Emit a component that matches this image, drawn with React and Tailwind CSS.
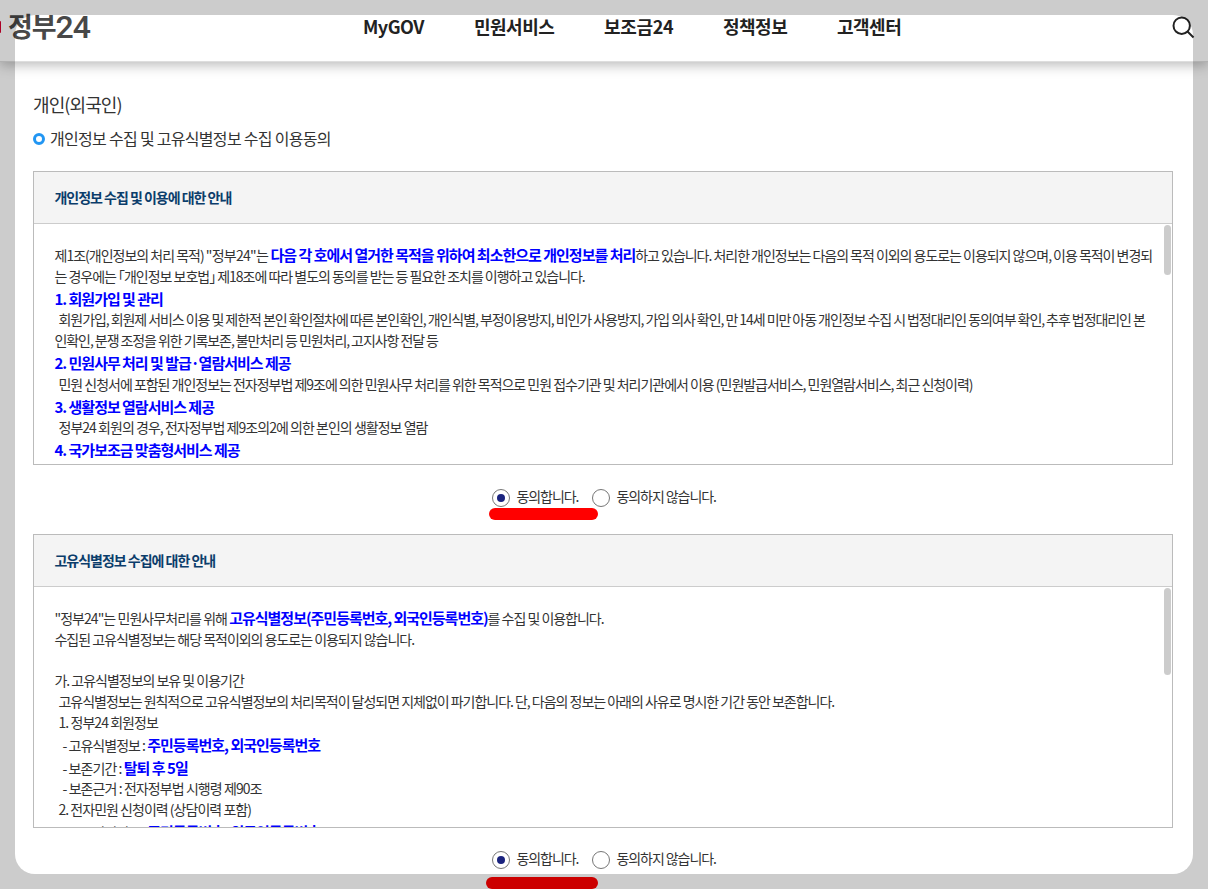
import React from 'react';

const menus = [
    { label: 'MyGOV', className: 'w-[111px]' },
    { label: '민원서비스', className: 'w-[130px]' },
    { label: '보조금24', className: 'w-[119px] tracking-[-0.3px]' },
    { label: '정책정보', className: 'w-[114px]' },
    { label: '고객센터', className: 'w-[80px]' },
];

function Em({ children }) {
    return <strong className="text-[15px] font-bold text-[#0000ff]">{children}</strong>;
}

function Line({ children, height = 'h-[21px]', className = '' }) {
    return <p className={`flex items-center whitespace-pre ${height} ${className}`}><span>{children}</span></p>;
}

function Header() {
    return (
        <header className="relative flex h-[62px] shrink-0 items-start border-b border-[#dedede] bg-white shadow-[0_3px_12px_rgba(0,0,0,0.28)]">
            <div className="flex w-[363px] items-start">
                <span className="mt-[21px] h-3 w-[1px] rounded-r-full bg-[#d8002f]"></span>
                <div className="ml-[7px] flex h-[53px] items-center whitespace-nowrap text-[#484848]">
                    <span className="text-[27px] font-bold tracking-[-1.1px]">정부</span>
                    <span className="pt-px font-['Roboto',sans-serif] text-[32px] font-medium tracking-[-0.9px]">24</span>
                </div>
            </div>
            <nav className="flex h-[52px] items-center text-[18px] font-bold tracking-[-0.5px] text-[#222]">
                {menus.map((m) => (
                    <a key={m.label} className={m.className}>{m.label}</a>
                ))}
            </nav>
            <svg className="ml-auto mr-[13px] mt-4 h-[23px] w-[23px]" viewBox="0 0 23 23" fill="none" stroke="#222" strokeWidth="2">
                <circle cx="9.7" cy="9.7" r="8.2" />
                <path d="M15.5 15.5L21.5 21.5" />
            </svg>
        </header>
    );
}

function TermsBox({ title, thumb, children }) {
    return (
        <section className="flex h-[294px] w-[1140px] flex-col border border-[#bbb]">
            <h3 className="flex h-[52px] shrink-0 items-center border-b border-[#ccc] bg-[#f4f4f4] pb-px pl-[20.5px] text-[14px] font-bold tracking-[-1.02px] text-[#0b3d6b]">
                {title}
            </h3>
            <div className="flex min-h-0 flex-1 justify-between overflow-hidden">
                <div className="pl-[20.5px] pt-[19px] text-[14px] leading-[21px] tracking-[-1.02px] text-[#333]">{children}</div>
                <div className={`mr-px mt-px w-[7px] shrink-0 rounded-full bg-[#ccc] ${thumb}`}></div>
            </div>
        </section>
    );
}

function Radio({ label, checked, className }) {
    return (
        <label className={`flex items-center whitespace-nowrap ${className}`}>
            <span className="mr-[6.5px] flex h-[18px] w-[18px] shrink-0 items-center justify-center rounded-full border border-[#777] bg-white">
                {checked && <span className="h-2 w-2 rounded-full bg-[#1a237e]"></span>}
            </span>
            <span className="pb-[3px]">{label}</span>
        </label>
    );
}

function AgreeRow({ className, markClass }) {
    return (
        <div className={`relative flex h-[69px] items-center pl-[459px] text-[14px] tracking-[-1.07px] text-[#333] ${className}`}>
            <Radio label="동의합니다." checked className="w-[100px]" />
            <Radio label="동의하지 않습니다." />
            <span className={`absolute h-3 rounded-[6px] bg-[#ff0000] ${markClass}`}></span>
        </div>
    );
}

export default function App() {
    return (
        <div className="relative flex h-[889px] w-[1208px] flex-col overflow-hidden bg-white font-['Noto_Sans_CJK_KR',sans-serif]">
            <Header />
            <main className="flex flex-col pl-[33px]">
                <h1 className="mt-7 h-7 text-[18px] leading-7 tracking-[-0.9px] text-[#333]">개인(외국인)</h1>
                <h2 className="mt-[9px] flex h-6 items-center text-[16px] tracking-[-0.7px] text-[#333]">
                    <span className="mr-[5px] h-3 w-3 rounded-full border-[3px] border-[#2196f3]"></span>
                    <span className="pb-[2px]">개인정보 수집 및 고유식별정보 수집 이용동의</span>
                </h2>
                <div className="h-5"></div>
                <TermsBox title="개인정보 수집 및 이용에 대한 안내" thumb="h-[50px]">
                    <Line height="h-[22px]" className="pt-[2px] tracking-[-1px]">제1조(개인정보의 처리 목적) <span className="tracking-[-0.75px]">"정부24"는 </span><Em>다음 각 호에서 열거한 목적을 위하여 최소한으로 개인정보를 처리</Em><span className="tracking-[-1.03px]">하고 있습니다. 처리한 개인정보는 다음의 목적 이외의 용도로는 이용되지 않으며, 이용 목적이 변경되</span></Line>
                    <Line height="h-[22px]" className="pt-px">는 경우에는 ｢개인정보 보호법｣ 제18조에 따라 별도의 동의를 받는 등 필요한 조치를 이행하고 있습니다.</Line>
                    <Line height="h-[22px]" className="pt-[2px]"><Em>1. 회원가입 및 관리</Em></Line>
                    <Line className="pl-1 tracking-[-1.06px]">회원가입, 회원제 서비스 이용 및 제한적 본인 확인절차에 따른 본인확인, 개인식별, 부정이용방지, 비인가 사용방지, 가입 의사 확인, 만 14세 미만 아동 개인정보 수집 시 법정대리인 동의여부 확인, 추후 법정대리인 본</Line>
                    <Line className="tracking-[-1.07px]">인확인, 분쟁 조정을 위한 기록보존, 불만처리 등 민원처리, 고지사항 전달 등</Line>
                    <Line height="h-[22px]" className="pt-[2px]"><Em>2. 민원사무 처리 및 발급·열람서비스 제공</Em></Line>
                    <Line height="h-[22px]" className="pl-1 pt-px">민원 신청서에 포함된 개인정보는 전자정부법 제9조에 의한 민원사무 처리를 위한 목적으로 민원 접수기관 및 처리기관에서 이용 (민원발급서비스, 민원열람서비스, 최근 신청이력)</Line>
                    <Line height="h-[22px]" className="pt-[2px]"><Em>3. 생활정보 열람서비스 제공</Em></Line>
                    <Line className="pl-1 tracking-[-0.97px]">정부24 회원의 경우, 전자정부법 제9조의2에 의한 본인의 생활정보 열람</Line>
                    <Line height="h-[22px]" className="pt-[2px]"><Em>4. 국가보조금 맞춤형서비스 제공</Em></Line>
                </TermsBox>
                <AgreeRow className="pb-[3px]" markClass="left-[456px] top-[43px] w-[109px]" />
                <TermsBox title="고유식별정보 수집에 대한 안내" thumb="h-[87px]">
                    <Line height="h-[22px]" className="pt-[2px]"><span className="tracking-[-0.95px]">"정부24"는 민원사무처리를 위해 </span><Em>고유식별정보(주민등록번호, 외국인등록번호)</Em>를 수집 및 이용합니다.</Line>
                    <Line className="pt-px">수집된 고유식별정보는 해당 목적이외의 용도로는 이용되지 않습니다.</Line>
                    <Line> </Line>
                    <Line>가. 고유식별정보의 보유 및 이용기간</Line>
                    <Line className="pl-1">고유식별정보는 원칙적으로 고유식별정보의 처리목적이 달성되면 지체없이 파기합니다. 단, 다음의 정보는 아래의 사유로 명시한 기간 동안 보존합니다.</Line>
                    <Line className="pl-1 tracking-[-0.95px]">1. 정부24 회원정보</Line>
                    <Line height="h-[23px]" className="pl-2 tracking-[-0.98px]">- 고유식별정보 : <Em>주민등록번호, 외국인등록번호</Em></Line>
                    <Line height="h-[22px]" className="pl-2 pt-[2px] tracking-[-0.95px]">- 보존기간 : <Em>탈퇴 후 5일</Em></Line>
                    <Line className="pl-2 tracking-[-0.92px]">- 보존근거 : 전자정부법 시행령 제90조</Line>
                    <Line className="pl-1 tracking-[-0.98px]">2. 전자민원 신청이력 (상담이력 포함)</Line>
                    <Line height="h-[23px]" className="pl-2 tracking-[-0.98px]">- 고유식별정보 : <Em>주민등록번호, 외국인등록번호</Em></Line>
                </TermsBox>
                <AgreeRow className="pb-[5px]" markClass="left-[453px] top-[49px] w-[112px]" />
            </main>
            {/* dimmed frame around the page */}
            <div className="pointer-events-none absolute inset-[15px] rounded-[20px] shadow-[0_0_0_40px_rgba(0,0,0,0.2)]"></div>
        </div>
    );
}
